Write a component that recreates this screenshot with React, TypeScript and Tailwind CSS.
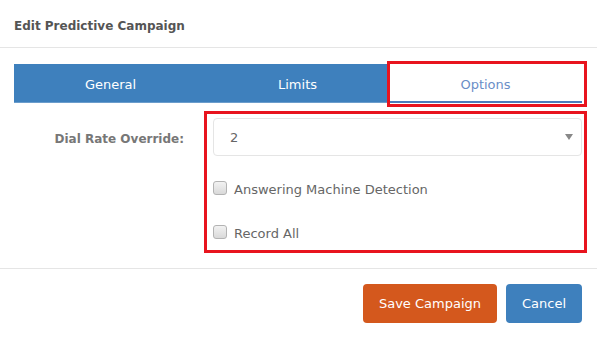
import React from "react";

const Checkbox: React.FC<{ label: string }> = ({ label }) => (
  <label className="flex items-center h-[16px] text-[#666]">
    <span className="w-[14px] h-[14px] rounded-[3px] border border-[#b3b3b3] bg-gradient-to-b from-[#f2f2f2] to-[#d9d9d9] shrink-0" />
    <span className="ml-[7px] pt-[2px] leading-none">{label}</span>
  </label>
);

const App: React.FC = () => {
  return (
    <div className="w-[597px] h-[340px] bg-white text-[13px] text-[#555] font-['DejaVu_Sans',sans-serif] overflow-hidden">
      <div className="h-[48px] flex items-center px-[14px] border-b border-[#e5e5e5]">
        <h4 className="font-bold text-[12px] text-[#555] pt-[4px]">Edit Predictive Campaign</h4>
      </div>

      <div className="pt-[16px] pl-[14px] h-[221px] border-b border-[#e5e5e5]">
        <div className="flex h-[39px] w-[569px]">
          <div className="w-[193px] bg-[#3e80bd] text-white flex items-center justify-center pt-[3px] border-b border-[#6b9dcc]">
            General
          </div>
          <div className="w-[181px] bg-[#3e80bd] text-white flex items-center justify-center pt-[3px] border-b border-[#6b9dcc]">
            Limits
          </div>
          <div className="relative w-[195px] bg-white flex items-center justify-center pt-[3px] text-[#6a8ec7]">
            <span>Options</span>
            <span className="absolute left-[2px] right-[1px] bottom-0 h-[2px] bg-[#4a7cbc]" />
            <span className="absolute -left-[1px] -top-[3px] -right-[4px] -bottom-[4px] border-[3px] border-[#e8141e]" />
          </div>
        </div>

        <div className="flex mt-[8px]">
          <div className="w-[190px] shrink-0 pr-[20px] pt-[9px] text-right">
            <span className="font-bold text-[12px] text-[#777] leading-[38px]">Dial Rate Override:</span>
          </div>
          <div className="w-[383px] h-[142px] shrink-0 border-[3px] border-[#e8141e] pl-[6px] pr-[2px] pt-[4px]">
            <div className="h-[38px] rounded-[4px] border border-[#e5e5e5] flex items-center pl-[16px] pr-[8px]">
              <span className="flex-1 text-[#666] pt-[1px]">2</span>
              <svg width="8" height="6" viewBox="0 0 8 6">
                <path d="M0 0 L8 0 L4 6 Z" fill="#888" />
              </svg>
            </div>
            <div className="mt-[24px]">
              <Checkbox label="Answering Machine Detection" />
            </div>
            <div className="mt-[28px]">
              <Checkbox label="Record All" />
            </div>
          </div>
        </div>
      </div>

      <div className="flex justify-end gap-[9px] pt-[15px] pr-[15px]">
        <button className="w-[134px] h-[39px] rounded-[4px] bg-[#d4581d] text-white text-[13px]">
          Save Campaign
        </button>
        <button className="w-[76px] h-[39px] rounded-[4px] bg-[#3e80bd] text-white text-[13px]">
          Cancel
        </button>
      </div>
    </div>
  );
};

export default App;
